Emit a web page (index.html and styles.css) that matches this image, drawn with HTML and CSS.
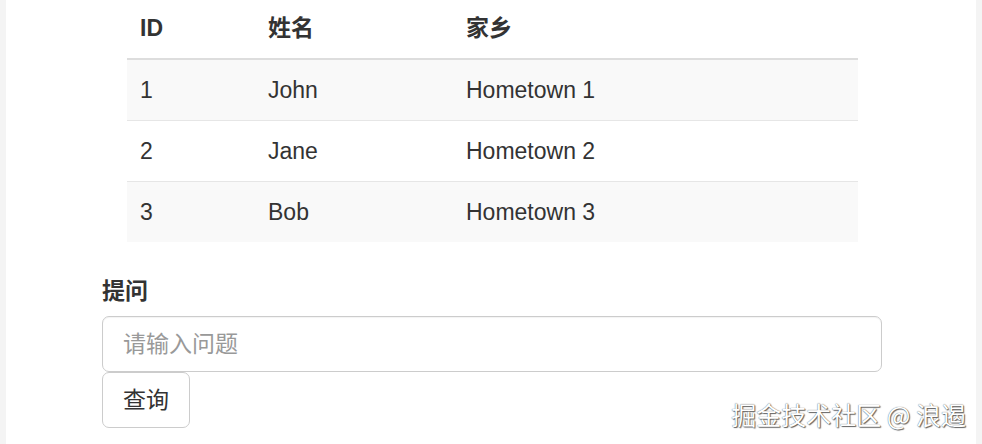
FILE: index.html
```html
<!DOCTYPE html>
<html lang="zh-CN">
<head>
    <meta charset="UTF-8">
    <meta name="viewport" content="width=device-width, initial-scale=1.0">
    <title>查询</title>
    <link rel="stylesheet" href="styles.css">
</head>
<body>

    <div class="page">
        <div class="container">
            <div class="result">
                <table class="table">
                    <thead>
                        <tr>
                            <th class="col-id">ID</th>
                            <th class="col-name">姓名</th>
                            <th>家乡</th>
                        </tr>
                    </thead>
                    <tbody>
                        <tr>
                            <td>1</td>
                            <td>John</td>
                            <td>Hometown 1</td>
                        </tr>
                        <tr>
                            <td>2</td>
                            <td>Jane</td>
                            <td>Hometown 2</td>
                        </tr>
                        <tr>
                            <td>3</td>
                            <td>Bob</td>
                            <td>Hometown 3</td>
                        </tr>
                    </tbody>
                </table>
            </div>

            <form class="ask">
                <label for="question">提问</label>
                <input type="text" id="question" class="form-control" placeholder="请输入问题">
                <button type="button" class="btn">查询</button>
            </form>
        </div>
    </div>

    <div class="watermark">掘金技术社区 @ 浪遏</div>

</body>
</html>
```

FILE: styles.css
```css
html, body {
    margin: 0;
    height: 100%;
}
body {
    background-color: #f4f4f4;
    font-family: "Liberation Sans", "Noto Sans CJK SC", sans-serif;
    font-size: 23px;
    line-height: 34px;
    color: #333;
    overflow: hidden;
}
.page {
    margin: 0 6px;
    min-height: 100%;
    background-color: #fff;
}
.container {
    width: 780px;
    margin: 0 auto;
    padding-left: 2px;
}
.result {
    padding: 0 24px 0 25px;
}
.table {
    width: 100%;
    border-collapse: collapse;
    border-spacing: 0;
    margin-bottom: 32px;
}
.table th {
    text-align: left;
    font-weight: bold;
    padding: 11px 13px 13px;
    border-bottom: 2px solid #ddd;
}
.table td {
    padding: 13px;
}
.table tbody tr + tr td {
    border-top: 1px solid #e6e6e6;
}
.table tbody tr:nth-child(odd) {
    background-color: #f9f9f9;
}
.col-id {
    width: 102px;
}
.col-name {
    width: 172px;
}
.ask label {
    display: block;
    font-weight: bold;
    margin-bottom: 8px;
}
.form-control {
    display: block;
    box-sizing: border-box;
    width: 100%;
    height: 56px;
    padding: 10px 20px;
    font: inherit;
    color: #555;
    border: 1px solid #ccc;
    border-radius: 7px;
    box-shadow: inset 0 1px 1px rgba(0, 0, 0, .05);
    outline: none;
}
.form-control::placeholder {
    color: #999;
}
.btn {
    display: inline-block;
    padding: 10px 20px;
    font: inherit;
    color: #333;
    background-color: #fff;
    border: 1px solid #ccc;
    border-radius: 7px;
}
.watermark {
    position: absolute;
    right: 16px;
    bottom: 16px;
    font-family: "Noto Sans CJK SC", sans-serif;
    font-size: 25px;
    line-height: 28px;
    color: #fff;
    text-shadow: 0 0 1px #444, 1px 1px 1px #666;
}
```
